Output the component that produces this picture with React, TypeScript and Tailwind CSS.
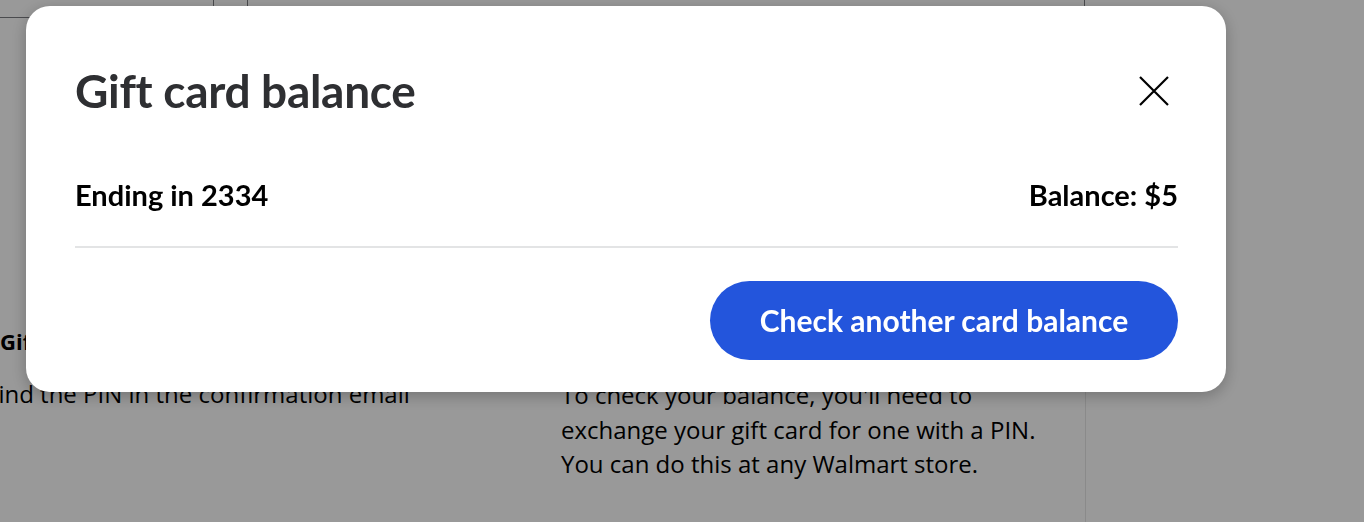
import React from "react";

const font = { fontFamily: "Lato, 'Open Sans', sans-serif" };
const bodyFont = { fontFamily: "'Open Sans', Lato, sans-serif" };

function CloseIcon() {
  return (
    <svg width="30" height="30" viewBox="0 0 30 30" fill="none" stroke="currentColor" strokeWidth="2.2">
      <path d="M1 1 L29 29 M29 1 L1 29" />
    </svg>
  );
}

function BackgroundPage() {
  return (
    <div className="flex h-[522px] w-full flex-col overflow-hidden bg-white text-black" style={bodyFont}>
      {/* top strip with table borders */}
      <div className="flex h-[18px] shrink-0">
        <div className="w-[214px] border-b border-r border-[#7c7d82]" />
        <div className="w-[34px] border-r border-[#7c7d82]" />
        <div className="w-[837px] border-r border-[#7c7d82]" />
      </div>

      <div className="flex flex-1">
        <div className="flex w-[1086px] border-r border-[#e6e6e6]">
          <div className="-ml-[14px] w-[575px] pt-[306px]">
            <h3 className="ml-[14px] text-[22px] font-bold leading-[34px]">Gift cards with a PIN</h3>
            <p className="mt-[19px] text-[24px] leading-[34.5px]">
              Find the PIN in the confirmation email
            </p>
          </div>
          <div className="w-[510px] pt-[360px]">
            <p className="text-[24px] leading-[34.5px]">
              To check your balance, you'll need to
              <br />
              exchange your gift card for one with a PIN.
              <br />
              You can do this at any Walmart store.
            </p>
          </div>
        </div>
      </div>
    </div>
  );
}

function GiftCardModal() {
  return (
    <div
      className="fixed left-[26px] top-[6px] w-[1200px] rounded-[24px] bg-white pl-[49px] pr-[48px] pb-[32px] shadow-[0_4px_16px_rgba(0,0,0,0.25)]"
      style={font}
    >
      <div className="mt-[61px] flex h-[48px] items-center justify-between">
        <h2 className="text-[46px] font-bold leading-[48px] tracking-[-0.3px] text-[#2e2f32]">
          Gift card balance
        </h2>
        <button className="mr-[9px] text-black">
          <CloseIcon />
        </button>
      </div>

      <div className="mt-[64px] flex items-center justify-between border-b-2 border-[#e3e4e5] pb-[35px] text-[29px] font-bold leading-[32px] text-black">
        <span>Ending in 2334</span>
        <span>Balance: $5</span>
      </div>

      <div className="mt-[33px] flex justify-end">
        <button className="h-[79px] w-[468px] rounded-full bg-[#2355dc] text-[30px] font-bold text-white">
          Check another card balance
        </button>
      </div>
    </div>
  );
}

export default function App() {
  return (
    <div className="relative">
      <BackgroundPage />
      <div className="fixed inset-0 bg-black/40" />
      <GiftCardModal />
    </div>
  );
}
